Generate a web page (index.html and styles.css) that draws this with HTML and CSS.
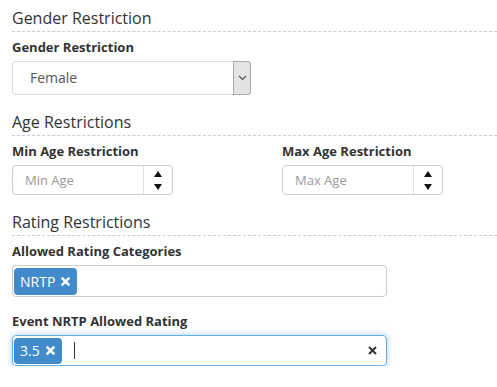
FILE: index.html
```html
<!DOCTYPE html>
<html lang="en">
<head>
    <meta charset="UTF-8">
    <title>Restrictions</title>
    <link rel="stylesheet" href="styles.css">
</head>
<body>

<!-- Gender -->
<section class="group">
    <h2 class="legend">Gender Restriction</h2>
    <label class="field-label">Gender Restriction</label>
    <div class="select-box">
        <span class="select-value">Female</span>
        <span class="select-arrow">
            <svg width="9" height="6" viewBox="0 0 9 6"><path d="M1 1l3.5 3.5L8 1" fill="none" stroke="#555" stroke-width="1.2"/></svg>
        </span>
    </div>
</section>

<!-- Age -->
<section class="group">
    <h2 class="legend">Age Restrictions</h2>
    <div class="two-col">
        <div>
            <label class="field-label">Min Age Restriction</label>
            <div class="number-box">
                <span class="placeholder">Min Age</span>
                <span class="spinner">
                    <svg width="8" height="6" viewBox="0 0 8 6"><path d="M4 0L8 6H0z" fill="#111"/></svg>
                    <svg width="8" height="6" viewBox="0 0 8 6"><path d="M0 0h8L4 6z" fill="#111"/></svg>
                </span>
            </div>
        </div>
        <div>
            <label class="field-label">Max Age Restriction</label>
            <div class="number-box">
                <span class="placeholder">Max Age</span>
                <span class="spinner">
                    <svg width="8" height="6" viewBox="0 0 8 6"><path d="M4 0L8 6H0z" fill="#111"/></svg>
                    <svg width="8" height="6" viewBox="0 0 8 6"><path d="M0 0h8L4 6z" fill="#111"/></svg>
                </span>
            </div>
        </div>
    </div>
</section>

<!-- Rating -->
<section class="group">
    <h2 class="legend">Rating Restrictions</h2>
    <label class="field-label">Allowed Rating Categories</label>
    <div class="tag-input">
        <span class="tag">NRTP <svg class="tag-x" width="11" height="11" viewBox="0 0 10 10"><path d="M1.5 1.5l7 7M8.5 1.5l-7 7" stroke="#fff" stroke-width="2.3"/></svg></span>
    </div>

    <label class="field-label second">Event NRTP Allowed Rating</label>
    <div class="tag-input focused">
        <span class="tag">3.5 <svg class="tag-x" width="11" height="11" viewBox="0 0 10 10"><path d="M1.5 1.5l7 7M8.5 1.5l-7 7" stroke="#fff" stroke-width="2.3"/></svg></span>
        <span class="caret"></span>
        <svg class="clear-x" width="9" height="9" viewBox="0 0 9 9"><path d="M1 1l7 7M8 1l-7 7" stroke="#333" stroke-width="2"/></svg>
    </div>
</section>

</body>
</html>
```

FILE: styles.css
```css
body {
    font-family: "Open Sans", Arial, sans-serif;
    color: #333;
    margin: 0;
    padding: 0 0 0 12px;
    background: #fff;
}
.group {
    margin: 0;
}
.legend {
    font-size: 16px;
    font-weight: normal;
    line-height: 22px;
    margin: 7px 0 0;
    padding-bottom: 2px;
    border-bottom: 1px dashed #ccc;
}
.group + .group .legend {
    margin-top: 16px;
}
.field-label {
    display: block;
    font-size: 13px;
    font-weight: bold;
    line-height: 18px;
    margin: 6px 0 5px;
}
.field-label.second {
    margin-top: 15px;
}
.select-box {
    display: flex;
    align-items: stretch;
    width: 239px;
    height: 34px;
    box-sizing: border-box;
    border: 1px solid #ddd;
    border-radius: 4px;
    font-size: 14px;
    color: #555;
}
.select-value {
    flex: 1;
    padding-left: 17px;
    line-height: 32px;
}
.select-arrow {
    width: 16px;
    display: flex;
    align-items: center;
    justify-content: center;
    background: #e3e3e3;
    border: 1px solid #aaa;
    border-radius: 0 3px 3px 0;
    margin: -1px -1px -1px 0;
}
.two-col {
    display: grid;
    grid-template-columns: 270px 1fr;
}
.number-box {
    display: flex;
    width: 161px;
    height: 30px;
    box-sizing: border-box;
    border: 1px solid #ccc;
    border-radius: 4px;
    font-size: 13px;
}
.placeholder {
    flex: 1;
    color: #999;
    padding-left: 12px;
    line-height: 28px;
}
.spinner {
    width: 28px;
    border-left: 1px solid #ddd;
    display: flex;
    flex-direction: column;
    align-items: center;
    justify-content: center;
    gap: 7px;
}
.tag-input {
    display: flex;
    align-items: center;
    width: 375px;
    height: 32px;
    box-sizing: border-box;
    border: 1px solid #ccc;
    border-radius: 4px;
    padding: 0 1px;
}
.tag-input.focused {
    height: 31px;
    border-color: #66afe9;
    box-shadow: 0 0 6px rgba(102, 175, 233, 0.6);
}
.tag {
    display: inline-flex;
    align-items: center;
    gap: 5px;
    height: 27px;
    padding: 0 6px;
    background: #428bca;
    color: #fff;
    font-size: 14px;
    border-radius: 4px;
}
.tag-input.focused .tag {
    height: 26px;
}
.caret {
    width: 1px;
    height: 17px;
    background: #333;
    margin-left: 12px;
}
.clear-x {
    margin-left: auto;
    margin-right: 8px;
}
```
